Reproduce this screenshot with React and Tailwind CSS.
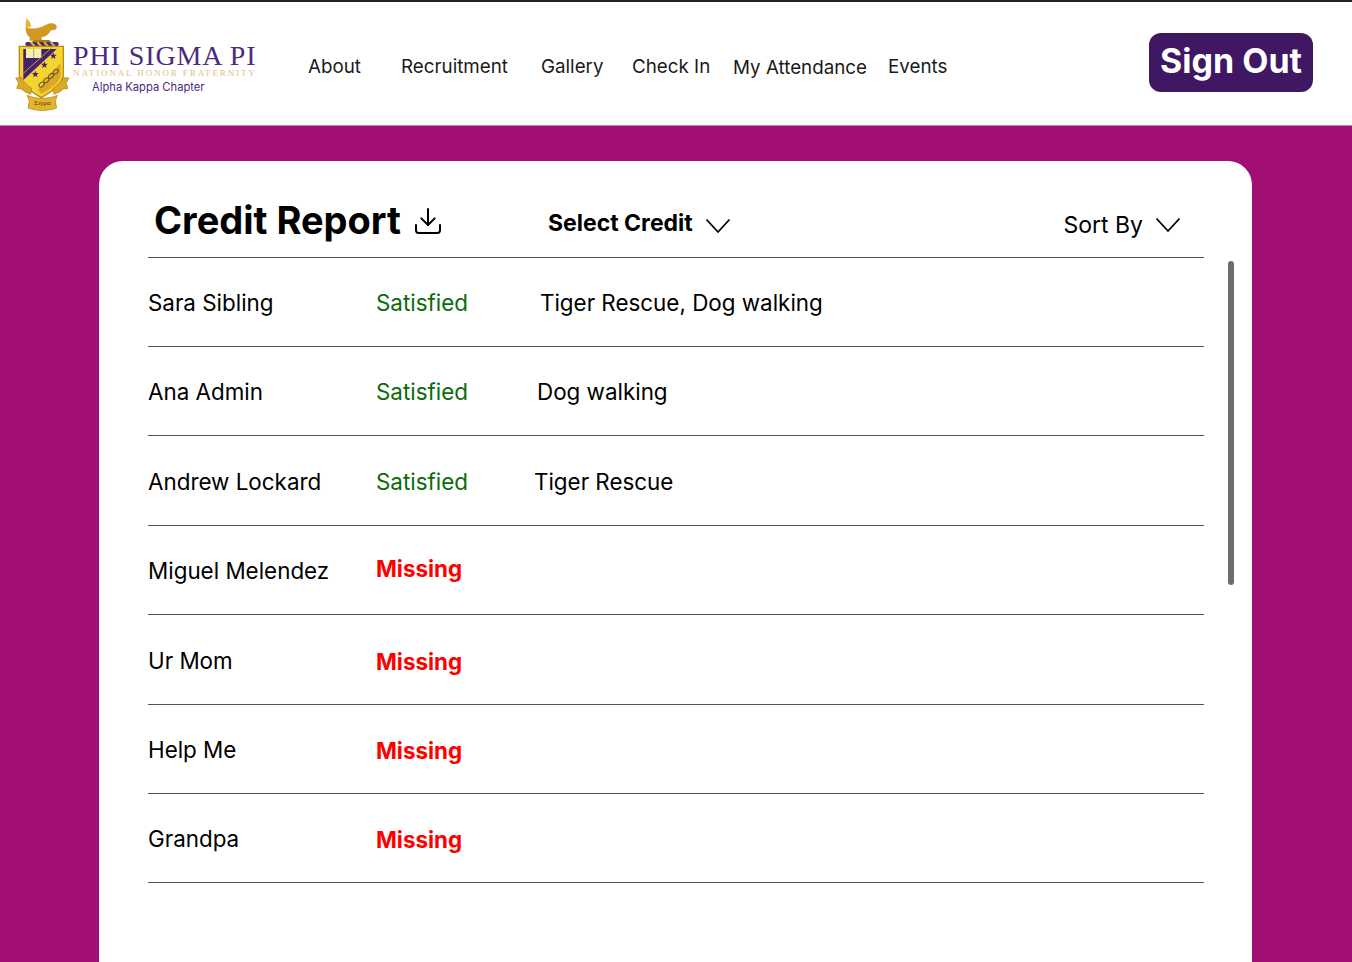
import { Download } from "lucide-react";

const navLinks = [
  { label: "About", cls: "w-[93px]" },
  { label: "Recruitment", cls: "w-[140px]" },
  { label: "Gallery", cls: "w-[91px]" },
  { label: "Check In", cls: "w-[101px]" },
  { label: "My Attendance", cls: "w-[155px] pt-0.5" },
  { label: "Events", cls: "" },
];

const rows = [
  { name: "Sara Sibling", status: "Satisfied", credits: "Tiger Rescue, Dog walking", creditCls: "ml-[72px]" },
  { name: "Ana Admin", status: "Satisfied", credits: "Dog walking", creditCls: "ml-[69px]" },
  { name: "Andrew Lockard", status: "Satisfied", credits: "Tiger Rescue", creditCls: "ml-[66px]" },
  { name: "Miguel Melendez", status: "Missing", statusCls: "-mt-1" },
  { name: "Ur Mom", status: "Missing", statusCls: "mt-0.5" },
  { name: "Help Me", status: "Missing", statusCls: "mt-0.5" },
  { name: "Grandpa", status: "Missing", statusCls: "mt-0.5" },
];

const Star = ({ x, y, r = 11 }) => {
  const pts = [];
  for (let i = 0; i < 10; i++) {
    const rad = i % 2 === 0 ? r : r * 0.42;
    const a = -Math.PI / 2 + (i * Math.PI) / 5;
    pts.push(`${x + rad * Math.cos(a)},${y + rad * Math.sin(a)}`);
  }
  return <polygon points={pts.join(" ")} fill="#44226f" />;
};

// viewBox is 3x the drawn size, so coordinates read straight off a 3x crop
const Crest = () => (
  <svg width="64" height="100" viewBox="0 0 192 300" className="shrink-0">
    {/* lamp */}
    <path d="M50 42c-6-10-2-18 0-30 6 8 14 14 12 26z" fill="#e9b52a" />
    <path d="M46 40c16 6 34 4 50-2 10-4 18-10 28-10 10 0 18 6 16 14-2 6-10 8-17 6-6 14-18 20-28 22v10h-36v-10c-8-4-12-18-13-30z" fill="#cf9a1f" />
    <path d="M72 78h46l6 6H66z" fill="#a87c16" />
    {/* rope band */}
    <rect x="46" y="84" width="100" height="13" rx="6" fill="#4a2a7a" />
    <path d="M62 84l12 13M82 84l12 13M102 84l12 13M122 84l12 13" stroke="#e3bb2f" strokeWidth="6" />
    {/* shield */}
    <path d="M28 97h132v84c0 30-36 52-66 70-30-18-66-40-66-70z" fill="#f4d431" stroke="#b88c18" strokeWidth="4" />
    <path d="M40 105h100L40 198z" fill="#44226f" />
    <rect x="48" y="105" width="46" height="27" fill="#f3eeb8" />
    <path d="M71 105v27" stroke="#8a7a50" strokeWidth="2" />
    <path d="M40 178 132 95" stroke="#c9a227" strokeWidth="3" />
    <Star x={130} y={126} />
    <Star x={103} y={153} />
    <Star x={76} y={181} />
    {/* chain band */}
    <path d="M152 146v36c0 24-32 42-58 58l-10-12z" fill="#dba925" />
    <g fill="none" stroke="#6d5320" strokeWidth="3">
      <ellipse cx="95" cy="212" rx="9" ry="6" transform="rotate(-42 95 212)" />
      <ellipse cx="109" cy="199" rx="9" ry="6" transform="rotate(-42 109 199)" />
      <ellipse cx="123" cy="186" rx="9" ry="6" transform="rotate(-42 123 186)" />
      <ellipse cx="137" cy="173" rx="9" ry="6" transform="rotate(-42 137 173)" />
    </g>
    {/* ribbons */}
    <path d="M17 192l18-1c4 12 16 22 30 32l-3 18-18-8-10-8-14-2 6-16z" fill="#dba925" stroke="#a97f17" strokeWidth="2" />
    <path d="M177 192l-18-1c-4 12-16 22-30 32l3 18 18-8 10-8 14-2-6-16z" fill="#dba925" stroke="#a97f17" strokeWidth="2" />
    <path d="M52 244c26 12 64 12 90 0l-6 18 4 20c-26 10-60 10-86 0l4-20z" fill="#e3b52c" stroke="#a97f17" strokeWidth="2" />
    <text x="97" y="273" textAnchor="middle" fontSize="21" fontFamily="'Liberation Serif', serif" fill="#4a3410">Σιγμα</text>
  </svg>
);

const Chevron = ({ className }) => (
  <svg width="26" height="16" viewBox="0 0 26 16" fill="none" stroke="black" strokeWidth="1.8" className={className}>
    <path d="M1.500 1.500 13 14 24.500 1.500" />
  </svg>
);

export default function App() {
  return (
    <div className="h-screen overflow-hidden flex flex-col bg-[#a10f74] font-['Inter',sans-serif] text-black">
      <header className="h-[126px] shrink-0 bg-white border-t-2 border-[#222222] border-b border-b-[#c77fb0] flex items-center pl-[10px]">
        <div className="flex items-center w-[298px]">
          <Crest />
          <div className="-ml-[1px] mt-[12px] flex flex-col">
            <span className="font-['Liberation_Serif',serif] text-[#4b2a7f] text-[28px] leading-[24px] tracking-[0.9px] whitespace-nowrap">
              PHI SIGMA PI
            </span>
            <span className="font-['Liberation_Serif',serif] text-[#dcc08c] text-[9px] leading-[10px] tracking-[1.88px] whitespace-nowrap">
              NATIONAL HONOR FRATERNITY
            </span>
            <span className="text-[#4b2a7f] text-[11.2px] leading-[18px] ml-[19px] whitespace-nowrap">Alpha Kappa Chapter</span>
          </div>
        </div>
        <nav className="flex items-center text-[18.8px] text-[#1a1a1a] mt-[8px]">
          {navLinks.map((link) => (
            <a key={link.label} className={`whitespace-nowrap ${link.cls}`}>
              {link.label}
            </a>
          ))}
        </nav>
        <button className="ml-auto mr-[39px] -mt-[3px] h-[59px] w-[164px] rounded-xl bg-[#3f1763] text-white font-bold text-[34px] leading-[55px] pb-1">
          Sign Out
        </button>
      </header>

      <main className="flex-1 pl-[99px] pr-[100px] pt-[35px]">
        <div className="relative h-[900px] bg-white rounded-t-[24px] pl-[49px] pr-[48px] pt-[32px]">
          <div className="h-[64.6px] flex items-start border-b border-[#555555]">
            <h1 className="ml-[6px] text-[38px] leading-[54px] font-bold whitespace-nowrap">Credit Report</h1>
            <Download className="ml-[11px] mt-[12px]" size={32} strokeWidth={1.5} />
            <div className="ml-[104px] mt-[13px] flex items-center gap-[12px] text-[23px] font-bold">
              Select Credit
              <Chevron className="mt-1.5" />
            </div>
            <div className="ml-auto mt-[15px] mr-[23px] flex items-center gap-[12px] text-[23px]">
              Sort By
              <Chevron />
            </div>
          </div>

          {rows.map((row) => (
            <div key={row.name} className="h-[89.4px] pt-[2px] flex items-center border-b border-[#555555] text-[22.4px]">
              <span className="w-[228px] whitespace-nowrap">{row.name}</span>
              <span
                className={
                  row.status === "Satisfied"
                    ? "text-[#0b6b0b]"
                    : `text-[#ff0000] font-bold ${row.statusCls}`
                }
              >
                {row.status}
              </span>
              {row.credits && <span className={row.creditCls}>{row.credits}</span>}
            </div>
          ))}

          <div className="absolute left-[1129px] top-[100px] w-[6px] h-[324px] rounded-full bg-[#6f6b6b]" />
        </div>
      </main>
    </div>
  );
}
